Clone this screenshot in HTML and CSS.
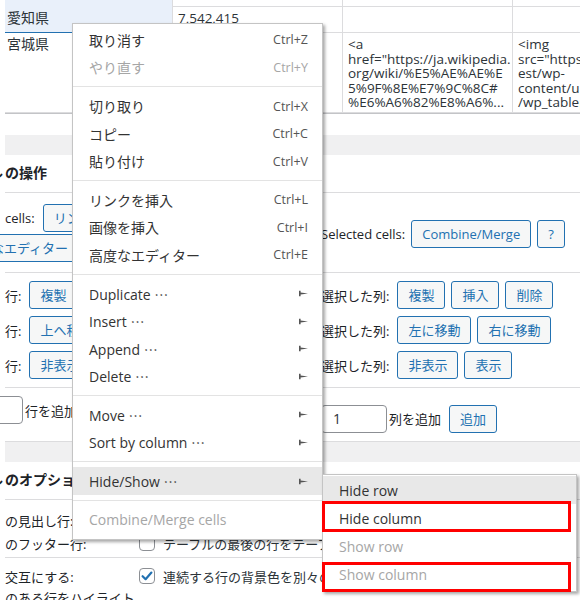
FILE: index.html
```html
<!DOCTYPE html>
<html lang="ja">
<head>
<meta charset="utf-8">
<link rel="stylesheet" href="styles.css">
</head>
<body>
<div class="page">
  <div class="grid">
    <div class="cell c1 edit top"></div>
    <div class="cell top"></div>
    <div class="cell top"></div>
    <div class="cell top"></div>

    <div class="cell c1 edit">愛知県</div>
    <div class="cell">7,542,415</div>
    <div class="cell"></div>
    <div class="cell"></div>

    <div class="cell c1">宮城県</div>
    <div class="cell"></div>
    <div class="cell">&lt;a<br>href="https://ja.wikipedia.<br>org/wiki/%E5%AE%AE%E<br>5%9F%8E%E7%9C%8C#<br>%E6%A6%82%E8%A6%...<br>81"&gt;wikipedia&lt;/a&gt;</div>
    <div class="cell">&lt;img<br>src="https://tablepress.t<br>est/wp-<br>content/uploads/2020/<br>/wp_tablepress.png"<br>alt="wiki"&gt;</div>
  </div>

  <div class="spacer"></div>
  <div class="band"></div>

  <h2 class="sec-title"><span class="frag"><span>ル</span></span>の操作</h2>

  <div class="sec sec-a">
    <div class="left">
      <div class="brow"><span class="lbl">cells:</span><button class="btn">リンクを挿入</button><button class="btn">画像を挿入</button></div>
      <div class="brow"><button class="btn shift">高度なエディター</button></div>
    </div>
    <div class="right">
      <span class="lbl">Selected cells:</span><button class="btn">Combine/Merge</button><button class="btn">?</button>
    </div>
  </div>

  <div class="sec sec-b">
    <div class="left rows">
      <div class="brow"><span class="lbl">行:</span><button class="btn">複製</button><button class="btn">挿入</button><button class="btn">削除</button></div>
      <div class="brow"><span class="lbl">行:</span><button class="btn">上へ移動</button><button class="btn">下へ移動</button></div>
      <div class="brow"><span class="lbl">行:</span><button class="btn">非表示</button><button class="btn">表示</button></div>
    </div>
    <div class="right rows">
      <div class="brow"><span class="lbl">選択した列:</span><button class="btn">複製</button><button class="btn">挿入</button><button class="btn">削除</button></div>
      <div class="brow"><span class="lbl">選択した列:</span><button class="btn">左に移動</button><button class="btn">右に移動</button></div>
      <div class="brow"><span class="lbl">選択した列:</span><button class="btn">非表示</button><button class="btn">表示</button></div>
    </div>
  </div>

  <div class="sec sec-c">
    <div class="left">
      <div class="brow"><span class="num neg">1</span><span class="addlbl">行を追加</span><button class="btn">追加</button></div>
    </div>
    <div class="right">
      <div class="brow"><span class="num">1</span><span class="addlbl">列を追加</span><button class="btn">追加</button></div>
    </div>
  </div>

  <div class="band"></div>

  <h2 class="sec-title"><span class="frag"><span>ル</span></span>のオプション</h2>

  <div class="sec sec-d">
    <div class="opt o1"><span class="olbl">の見出し行:</span><span class="chk"></span><span class="otext">テーブルの最初の行をテーブルの見出しにする</span></div>
    <div class="opt o2"><span class="olbl">のフッター行:</span><span class="chk"></span><span class="otext">テーブルの最後の行をテーブルのフッターにする</span></div>
  </div>
  <div class="sec sec-e">
    <div class="opt o3"><span class="olbl">交互にする:</span><span class="chk on"><svg viewBox="0 0 16 16" width="16" height="16"><path d="M3.6 8.2 L6.6 11.2 L12.4 4.6" fill="none" stroke="#2271b1" stroke-width="2.2" stroke-linecap="round" stroke-linejoin="round"/></svg></span><span class="otext">連続する行の背景色を別々の色にする</span></div>
    <div class="opt o4"><span class="olbl wide">のある行をハイライト</span></div>
  </div>
</div>

<div class="ctx">
  <div class="item"><span class="t">取り消す</span><span class="k">Ctrl+Z</span></div>
  <div class="item off"><span class="t">やり直す</span><span class="k">Ctrl+Y</span></div>
  <div class="sep"></div>
  <div class="item"><span class="t">切り取り</span><span class="k">Ctrl+X</span></div>
  <div class="item"><span class="t">コピー</span><span class="k">Ctrl+C</span></div>
  <div class="item"><span class="t">貼り付け</span><span class="k">Ctrl+V</span></div>
  <div class="sep"></div>
  <div class="item"><span class="t">リンクを挿入</span><span class="k">Ctrl+L</span></div>
  <div class="item"><span class="t">画像を挿入</span><span class="k">Ctrl+I</span></div>
  <div class="item"><span class="t">高度なエディター</span><span class="k">Ctrl+E</span></div>
  <div class="sep"></div>
  <div class="item"><span class="t">Duplicate <span class="dots">⋯</span></span><svg class="arr" viewBox="0 0 9 7" width="9" height="7"><path d="M0 0.8h1.6v5.4H0z M1.6 2.5 L9 3.5 L1.6 4.5z" fill="#555"/></svg></div>
  <div class="item"><span class="t">Insert <span class="dots">⋯</span></span><svg class="arr" viewBox="0 0 9 7" width="9" height="7"><path d="M0 0.8h1.6v5.4H0z M1.6 2.5 L9 3.5 L1.6 4.5z" fill="#555"/></svg></div>
  <div class="item"><span class="t">Append <span class="dots">⋯</span></span><svg class="arr" viewBox="0 0 9 7" width="9" height="7"><path d="M0 0.8h1.6v5.4H0z M1.6 2.5 L9 3.5 L1.6 4.5z" fill="#555"/></svg></div>
  <div class="item"><span class="t">Delete <span class="dots">⋯</span></span><svg class="arr" viewBox="0 0 9 7" width="9" height="7"><path d="M0 0.8h1.6v5.4H0z M1.6 2.5 L9 3.5 L1.6 4.5z" fill="#555"/></svg></div>
  <div class="sep"></div>
  <div class="item"><span class="t">Move <span class="dots">⋯</span></span><svg class="arr" viewBox="0 0 9 7" width="9" height="7"><path d="M0 0.8h1.6v5.4H0z M1.6 2.5 L9 3.5 L1.6 4.5z" fill="#555"/></svg></div>
  <div class="item"><span class="t">Sort by column <span class="dots">⋯</span></span><svg class="arr" viewBox="0 0 9 7" width="9" height="7"><path d="M0 0.8h1.6v5.4H0z M1.6 2.5 L9 3.5 L1.6 4.5z" fill="#555"/></svg></div>
  <div class="sep"></div>
  <div class="item hl"><span class="t">Hide/Show <span class="dots">⋯</span></span><svg class="arr" viewBox="0 0 9 7" width="9" height="7"><path d="M0 0.8h1.6v5.4H0z M1.6 2.5 L9 3.5 L1.6 4.5z" fill="#555"/></svg></div>
  <div class="sep"></div>
  <div class="item off"><span class="t">Combine/Merge cells</span></div>
</div>

<div class="sub">
  <div class="item hl"><span class="t">Hide row</span></div>
  <div class="item"><span class="t">Hide column</span></div>
  <div class="item off"><span class="t">Show row</span></div>
  <div class="item off"><span class="t">Show column</span></div>
</div>

<div class="mark m1"></div>
<div class="mark m2"></div>
</body>
</html>
```

FILE: styles.css
```css
* { box-sizing: border-box; }
html, body { margin: 0; padding: 0; }
body {
  width: 580px;
  height: 600px;
  overflow: hidden;
  position: relative;
  background: #fff;
  font-family: "Open Sans", "Noto Sans CJK JP", sans-serif;
  font-size: 13px;
  color: #1d2327;
}

.page { padding-left: 5px; width: 580px; }

/* table */
.grid {
  display: grid;
  grid-template-columns: 167px 170px 170px 170px;
  grid-template-rows: 7px 26px 80px;
  width: 677px;
  border-bottom: 1px solid #c3c4c7;
  font-size: 13.5px;
  line-height: 14.5px;
  color: #2c3338;
}
.cell {
  border-left: 1px solid #dcdcde;
  border-bottom: 1px solid #dcdcde;
  overflow: hidden;
  padding: 4px 5px;
  white-space: nowrap;
}
.cell.c1 { border-left: none; padding-left: 2px; font-size: 14px; }
.cell.top { padding: 0; }
.cell.edit { background: #e9f0fa; border-bottom-color: #2271b1; }
.cell.edit.top { border-bottom: none; }

.spacer { height: 21px; }
.band { height: 20px; background: #f0f0f1; width: 575px; }

.sec-title {
  margin: 0 0 0 -5px;
  height: 38px;
  font-size: 14px;
  font-weight: 700;
  line-height: 36px;
  white-space: nowrap;
  color: #1d2327;
  width: 580px;
  padding-left: 0;
  position: relative;
}
.sec-title::after {
  content: "";
  position: absolute;
  left: 5px;
  right: 0;
  bottom: 0;
  height: 1px;
  background: #dcdcde;
}
.frag { display: inline-block; width: 5px; overflow: hidden; vertical-align: top; }
.frag > span { display: inline-block; margin-left: -11px; }

/* sections */
.sec { display: flex; border-bottom: 1px solid #dcdcde; width: 575px; }
.left { width: 316px; flex: none; display: flex; flex-direction: column; white-space: nowrap; }
.right { flex: none; display: flex; align-items: center; gap: 6px; white-space: nowrap; }
.right.rows { flex-direction: column; align-items: flex-start; gap: 7px; }
.rows { gap: 7px; }
.brow { display: flex; align-items: center; gap: 6px; height: 28px; }
.lbl { margin-right: 2px; }
.right > .lbl { margin-right: 0; }

.btn {
  font: inherit;
  height: 28px;
  line-height: 26px;
  padding: 0 10px;
  border: 1px solid #2271b1;
  border-radius: 3px;
  background: #f6f7f7;
  color: #2271b1;
  white-space: nowrap;
  flex: none;
}

.sec-a { height: 80px; padding-top: 11px; padding-bottom: 9px; }
.sec-a .left { gap: 2px; }
.shift { margin-left: -51px; }

.sec-b { height: 115px; padding-top: 8px; }
.sec-c { height: 54px; padding-top: 8px; }

.num {
  width: 66px;
  height: 28px;
  border: 1px solid #8c8f94;
  border-radius: 4px;
  line-height: 26px;
  padding-left: 11px;
  font-size: 14px;
  color: #2c3338;
  flex: none;
}
.num.neg { margin-left: -48px; }
.addlbl { margin-left: -4px; margin-right: 2px; }

/* options */
.sec-d { height: 58px; padding-top: 8px; flex-direction: column; }
.sec-e { flex-direction: column; padding-top: 7px; border-bottom: none; }
.opt { display: flex; align-items: center; white-space: nowrap; }
.o1 { height: 24px; }
.o2 { height: 22px; }
.o3 { height: 22px; }
.o4 { height: 20px; }
.olbl { width: 134px; flex: none; }
.olbl.wide { width: auto; }
.chk {
  width: 16px;
  height: 16px;
  border: 1px solid #8c8f94;
  border-radius: 4px;
  background: #fff;
  flex: none;
  margin-right: 8px;
  position: relative;
}
.chk svg { position: absolute; left: -1px; top: -1px; }
.otext { color: #2c3338; }

/* context menu */
.ctx {
  position: absolute;
  left: 72px;
  top: 23px;
  width: 251px;
  background: #fff;
  border: 1px solid #c4c4c4;
  box-shadow: 2px 2px 3px rgba(0, 0, 0, 0.35);
  padding: 2px 0 5.5px;
  font-size: 14px;
  color: #333;
  z-index: 5;
}
.item {
  height: 27.5px;
  display: flex;
  align-items: center;
  justify-content: space-between;
  padding: 0 14px 0 16px;
  white-space: nowrap;
}
.item .k { font-size: 12.5px; color: #555; }
.item.off, .item.off .k { color: #a6a6a6; }
.item.hl { background: #e8e8e8; }
.sep { height: 1px; background: #e3e3e3; margin: 5px 0 5.25px; }
.dots { font-family: "Noto Sans CJK JP", sans-serif; font-size: 14px; color: #444; }
.arr { flex: none; }

.sub {
  position: absolute;
  left: 322px;
  top: 474px;
  width: 255px;
  background: #fff;
  border: 1px solid #c4c4c4;
  box-shadow: 2px 2px 3px rgba(0, 0, 0, 0.35);
  padding: 1px 0 3px;
  font-size: 14px;
  color: #333;
  z-index: 6;
}
.sub .item { height: 28px; }

.mark {
  position: absolute;
  left: 322px;
  width: 249px;
  border: 3px solid #ff0000;
  z-index: 7;
}
.m1 { top: 501px; height: 31px; }
.m2 { top: 562px; height: 30px; }
```
